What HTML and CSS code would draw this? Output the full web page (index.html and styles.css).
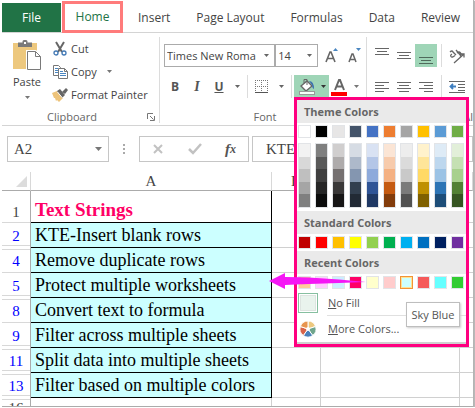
FILE: index.html
```html
<!DOCTYPE html>
<html lang="en">
<head>
<meta charset="utf-8">
<title>Workbook</title>
<link rel="stylesheet" href="styles.css">
</head>
<body>
<div class="app">
  <nav class="tabs">
    <button class="tab tab-file">File</button>
    <button class="tab tab-home">Home</button>
    <button class="tab">Insert</button>
    <button class="tab">Page Layout</button>
    <button class="tab">Formulas</button>
    <button class="tab">Data</button>
    <button class="tab">Review</button>
  </nav>

  <div class="ribbon">
    <section class="group clipboard">
      <div class="clip-body">
        <button class="paste">
          <svg width="30" height="32" viewBox="0 0 30 32"><rect x="1" y="4" width="24" height="26" fill="#edc87e"/><path d="M6 8V3.500h4.500V2.500Q10.500 1 12 1h2q1.500 0 1.500 1.500v1H20V8z" fill="#7a7a7a"/><rect x="12" y="3" width="2" height="2" fill="#fff"/><path d="M14 11h10l6 6v15H14z" fill="#fff"/><path d="M15.500 12.500h8l5 5v13h-13zM23.500 12.500v5h5" fill="#fff" stroke="#7a7a7a"/></svg>
          <span>Paste</span>
          <svg class="caret" width="5" height="3" viewBox="0 0 5 3"><path d="M0 0h5L2.500 3z" fill="#777"/></svg>
        </button>
        <div class="clip-list">
          <button class="cmd"><svg width="16" height="16" viewBox="0 0 16 16"><path d="M4 1l6 10M12 1L6 11" stroke="#666" stroke-width="2" fill="none"/><circle cx="4" cy="12" r="2" fill="#fff" stroke="#4178b4" stroke-width="1.300"/><circle cx="12" cy="12" r="2" fill="#fff" stroke="#4178b4" stroke-width="1.300"/></svg><span>Cut</span></button>
          <button class="cmd"><svg width="16" height="16" viewBox="0 0 16 16"><path d="M1.500 1.500h5l2 2v8h-7z" fill="#fff" stroke="#777"/><path d="M3 4.500h3M3 6.500h3M3 8.500h3" stroke="#4a86c0"/><path d="M6.500 4.500h6l3 3v7h-9z" fill="#fff" stroke="#777"/><path d="M12.500 4.500v3h3" fill="none" stroke="#777"/><path d="M8 7.500h3M8 9.500h6M8 11.500h6" stroke="#4a86c0"/></svg><span>Copy</span><svg class="copy-caret" width="5" height="3" viewBox="0 0 5 3"><path d="M0 0h5L2.500 3z" fill="#777"/></svg></button>
          <button class="cmd"><svg width="16" height="16" viewBox="0 0 16 16"><path d="M0 6l5-2 6 7-4 4-2-2-1 1-1-3-1 0z" fill="#edc37a"/><path d="M5 4l3-2 5 6-3 3z" fill="#666"/><path d="M5.500 5l5 6" stroke="#fff"/><path d="M10 5l4-4 2 2-3 4z" fill="#666"/></svg><span>Format Painter</span></button>
        </div>
      </div>
      <footer class="foot"><span>Clipboard</span><svg class="launcher" width="8" height="8" viewBox="0 0 8 8"><path d="M.5 6V.5H6M3 3l3.500 3.500M7.500 3v4.500H3" fill="none" stroke="#777"/></svg></footer>
    </section>

    <section class="group font">
      <div class="row row-top">
        <label class="combo combo-face"><select aria-label="Font"><option>Times New Roma</option></select><svg width="5" height="3" viewBox="0 0 5 3"><path d="M0 0h5L2.500 3z" fill="#666"/></svg></label>
        <label class="combo combo-size"><select aria-label="Font size"><option>14</option></select><svg width="5" height="3" viewBox="0 0 5 3"><path d="M0 0h5L2.500 3z" fill="#666"/></svg></label>
        <button class="icon grow" aria-label="Increase font size"><svg width="14" height="16" viewBox="0 0 14 16"><path d="M1 14L5 4h1l4 10M2.500 10.500h6" fill="none" stroke="#666" stroke-width="1.600"/><path d="M8 3l2.500-3L13 3z" fill="#4a86c0"/></svg></button>
        <button class="icon shrink" aria-label="Decrease font size"><svg width="14" height="16" viewBox="0 0 14 16"><path d="M1 14l3-8h1l3 8M2 11.500h5" fill="none" stroke="#666" stroke-width="1.500"/><path d="M8 0h5l-2.500 3z" fill="#4a86c0"/></svg></button>
      </div>
      <div class="row row-bottom">
        <button class="icon letter bold">B</button>
        <button class="icon letter italic">I</button>
        <button class="icon letter underline">U</button>
        <button class="icon arrow" aria-label="Underline styles"><svg width="5" height="3" viewBox="0 0 5 3"><path d="M0 0h5L2.500 3z" fill="#666"/></svg></button>
        <i class="sep"></i>
        <button class="icon borders" aria-label="Borders"><svg width="14" height="14" viewBox="0 0 14 14"><path d="M0 .5h13M0 6.500h13M.5 0v13M6.500 0v13M12.500 0v13" stroke="#777" stroke-dasharray="1 1"/><path d="M0 12.500h13" stroke="#555"/></svg></button>
        <button class="icon arrow" aria-label="Border styles"><svg width="5" height="3" viewBox="0 0 5 3"><path d="M0 0h5L2.500 3z" fill="#666"/></svg></button>
        <i class="sep"></i>
        <div class="fill">
          <button class="fill-button" aria-label="Fill color"><svg width="18" height="18" viewBox="0 0 18 18"><path d="M3 8l6-5 5 5-6 5z" fill="#fff" stroke="#666" stroke-width="1.300"/><path d="M6 5V1.500h3V7" fill="none" stroke="#666"/><path d="M11 3q5 0 5 8-2-1-2-4z" fill="#3c70b0"/><rect x="1.500" y="13.500" width="15" height="3" fill="#f4fff8" stroke="#999"/></svg><svg width="5" height="3" viewBox="0 0 5 3"><path d="M0 0h5L2.500 3z" fill="#333"/></svg></button>
          <div class="menu">
            <h3>Theme Colors</h3>
            <div class="swatches">
              <i style="background:#fff"></i><i style="background:#000"></i><i style="background:#e7e6e6"></i><i style="background:#44546a"></i><i style="background:#4472c4"></i><i style="background:#ed7d31"></i><i style="background:#a5a5a5"></i><i style="background:#ffc000"></i><i style="background:#5b9bd5"></i><i style="background:#70ad47"></i>
            </div>
            <div class="shades">
              <div><i style="background:#f2f2f2"></i><i style="background:#d8d8d8"></i><i style="background:#bfbfbf"></i><i style="background:#a5a5a5"></i><i style="background:#7f7f7f"></i></div>
              <div><i style="background:#7f7f7f"></i><i style="background:#595959"></i><i style="background:#3f3f3f"></i><i style="background:#262626"></i><i style="background:#0c0c0c"></i></div>
              <div><i style="background:#d0cece"></i><i style="background:#aeabab"></i><i style="background:#757070"></i><i style="background:#3a3838"></i><i style="background:#171616"></i></div>
              <div><i style="background:#d6dce4"></i><i style="background:#adb9ca"></i><i style="background:#8496b0"></i><i style="background:#323f4f"></i><i style="background:#222a35"></i></div>
              <div><i style="background:#d9e2f3"></i><i style="background:#b4c6e7"></i><i style="background:#8eaadb"></i><i style="background:#2f5496"></i><i style="background:#1f3864"></i></div>
              <div><i style="background:#fbe5d5"></i><i style="background:#f7cbac"></i><i style="background:#f4b183"></i><i style="background:#c55a11"></i><i style="background:#833c0b"></i></div>
              <div><i style="background:#ededed"></i><i style="background:#dbdbdb"></i><i style="background:#c9c9c9"></i><i style="background:#7b7b7b"></i><i style="background:#525252"></i></div>
              <div><i style="background:#fff2cc"></i><i style="background:#fee599"></i><i style="background:#ffd965"></i><i style="background:#bf9000"></i><i style="background:#7f6000"></i></div>
              <div><i style="background:#deebf6"></i><i style="background:#bdd7ee"></i><i style="background:#9cc3e5"></i><i style="background:#2e75b5"></i><i style="background:#1e4e79"></i></div>
              <div><i style="background:#e2efd9"></i><i style="background:#c5e0b3"></i><i style="background:#a8d08d"></i><i style="background:#538135"></i><i style="background:#375623"></i></div>
            </div>
            <h3>Standard Colors</h3>
            <div class="swatches">
              <i style="background:#c00000"></i><i style="background:#f00"></i><i style="background:#ffc000"></i><i style="background:#ff0"></i><i style="background:#92d050"></i><i style="background:#00b050"></i><i style="background:#00b0f0"></i><i style="background:#0070c0"></i><i style="background:#002060"></i><i style="background:#7030a0"></i>
            </div>
            <h3>Recent Colors</h3>
            <div class="swatches">
              <i style="background:#fc9"></i><i style="background:#fcf"></i><i style="background:#cef"></i><i style="background:#ff0066"></i><i style="background:#ffc"></i><i style="background:#fcc"></i><i class="picked" style="background:#cff"></i><i style="background:#f55a5a"></i><i style="background:#6ff"></i><i style="background:#3c3"></i>
            </div>
            <button class="item"><i class="nofill"></i><span><u>N</u>o Fill</span></button>
            <hr>
            <button class="item item-more"><svg width="20" height="18" viewBox="-10 -9 20 18"><g stroke="#fff" stroke-width="1"><path d="M0 0V-8A8 8 0 0 1 7.600-2.500z" fill="#edc87e"/><path d="M0 0L7.600-2.500A8 8 0 0 1 4.700 6.500z" fill="#6fa58c"/><path d="M0 0L4.700 6.500A8 8 0 0 1-4.700 6.500z" fill="#4a80bb"/><path d="M0 0L-4.700 6.500A8 8 0 0 1-7.600-2.500z" fill="#d9644a"/><path d="M0 0L-7.600-2.500A8 8 0 0 1 0-8z" fill="#e8954f"/></g><circle r="2" fill="#fff"/></svg><span><u>M</u>ore Colors...</span></button>
            <div class="tooltip">Sky Blue</div>
            <svg class="pointer" width="98" height="20" viewBox="0 0 98 20"><path d="M0 10L16 2V6L40 6.500 70 8.500 97 11 70 12 40 13 16 14V18z" fill="#f517f5"/></svg>
          </div>
        </div>
        <button class="icon fontcolor" aria-label="Font color"><svg width="17" height="18" viewBox="0 0 17 18"><path d="M4 12L8 2h1l4 10M5.500 8.500h6" fill="none" stroke="#666" stroke-width="2"/><rect x="0" y="14" width="16" height="4" fill="#f00"/></svg></button>
        <button class="icon arrow" aria-label="More font colors"><svg width="5" height="3" viewBox="0 0 5 3"><path d="M0 0h5L2.500 3z" fill="#777"/></svg></button>
      </div>
      <footer class="foot"><span>Font</span></footer>
    </section>

    <section class="group align">
      <div class="row row-top">
        <button class="icon al" aria-label="Top align"><svg width="14" height="22" viewBox="0 0 14 22"><path d="M0 3.500h14M2 6.500h10M0 9.500h14" stroke="#666"/></svg></button>
        <button class="icon al" aria-label="Middle align"><svg width="14" height="22" viewBox="0 0 14 22"><path d="M0 7.500h14M2 10.500h10M0 13.500h14" stroke="#666"/></svg></button>
        <button class="icon al on" aria-label="Bottom align"><svg width="14" height="22" viewBox="0 0 14 22"><path d="M0 12.500h14M2 15.500h10M0 18.500h14" stroke="#4f6a5b"/></svg></button>
        <i class="sep"></i>
        <button class="icon orient" aria-label="Orientation"><svg width="18" height="18" viewBox="0 0 18 18"><g fill="none" stroke="#666" stroke-width="1.300"><path d="M2 5q2-2 3 0l3 3M4 7q-2 1-1 2.500t4-1M8 3l5 6M9 6q2-2 3.500 0t-.5 3.500"/><path d="M6 16L16 7M12.500 7H16v3.500"/></g></svg></button>
        <button class="icon arrow" aria-label="Orientation options"><svg width="5" height="3" viewBox="0 0 5 3"><path d="M0 0h5L2.500 3z" fill="#666"/></svg></button>
      </div>
      <div class="row row-bottom">
        <button class="icon al" aria-label="Align left"><svg width="14" height="12" viewBox="0 0 14 12"><path d="M0 1.500h14M0 4.500h9M0 7.500h14M0 10.500h9" stroke="#666"/></svg></button>
        <button class="icon al" aria-label="Center"><svg width="14" height="12" viewBox="0 0 14 12"><path d="M0 1.500h14M2 4.500h10M0 7.500h14M2 10.500h10" stroke="#666"/></svg></button>
        <button class="icon al" aria-label="Align right"><svg width="14" height="12" viewBox="0 0 14 12"><path d="M0 1.500h14M5 4.500h9M0 7.500h14M5 10.500h9" stroke="#666"/></svg></button>
        <i class="sep"></i>
        <button class="icon orient" aria-label="Decrease indent"><svg width="18" height="14" viewBox="0 0 18 14"><path d="M1 1.500h16M10 4.500h7M10 7.500h7M1 12.500h16M10 10.500h7" stroke="#666"/><path d="M8 6.500H3M5 4L2.500 6.500 5 9" fill="none" stroke="#3f7fc0" stroke-width="1.800"/></svg></button>
        <button class="icon arrow" aria-label="Increase indent"><svg width="5" height="14" viewBox="0 0 5 14"><path d="M0 1.500h5M0 12.500h5" stroke="#666"/><path d="M0 6.500h5" stroke="#3f7fc0" stroke-width="1.800"/></svg></button>
      </div>
      <footer class="foot"><span>Al</span></footer>
    </section>
  </div>

  <div class="formula-bar">
    <label class="namebox"><input aria-label="Name box" value="A2"><svg width="7" height="4" viewBox="0 0 7 4"><path d="M0 0h7L3.500 4z" fill="#777"/></svg></label>
    <svg class="dots" width="2" height="10" viewBox="0 0 2 10"><path d="M0 0h2v2H0zM0 4h2v2H0zM0 8h2v2H0z" fill="#aaa"/></svg>
    <div class="fx">
      <button class="icon" aria-label="Cancel"><svg width="12" height="12" viewBox="0 0 12 12"><path d="M2 2l8 8M10 2l-8 8" stroke="#c2c2c2" stroke-width="2"/></svg></button>
      <button class="icon" aria-label="Enter"><svg width="14" height="12" viewBox="0 0 14 12"><path d="M1 6l4 4 8-9" fill="none" stroke="#c2c2c2" stroke-width="2.500"/></svg></button>
      <button class="icon fn"><i>f</i><small>x</small></button>
    </div>
    <input class="formula" aria-label="Formula" value="KTE">
  </div>

  <table class="sheet">
    <colgroup><col class="c-num"><col class="c-a"><col class="c-b"><col class="c-c"><col></colgroup>
    <thead>
      <tr><th class="corner"><svg width="11" height="11" viewBox="0 0 11 11"><path d="M11 0v11H0z" fill="#dcdcdc"/></svg></th><th>A</th><th>B</th><th></th><th></th></tr>
    </thead>
    <tbody>
      <tr class="title"><th><span>1</span></th><td>Text Strings</td><td></td><td></td><td></td></tr>
      <tr><th><span class="below">2</span></th><td>KTE-Insert blank rows</td><td></td><td></td><td></td></tr>
      <tr><th><span class="above">4</span></th><td>Remove duplicate rows</td><td></td><td></td><td></td></tr>
      <tr><th><span class="below">5</span></th><td>Protect multiple worksheets</td><td></td><td></td><td></td></tr>
      <tr><th><span class="above">8</span></th><td>Convert text to formula</td><td></td><td></td><td></td></tr>
      <tr><th><span class="below">9</span></th><td>Filter across multiple sheets</td><td></td><td></td><td></td></tr>
      <tr><th><span class="above below">11</span></th><td>Split data into multiple sheets</td><td></td><td></td><td></td></tr>
      <tr><th><span class="above below">13</span></th><td>Filter based on multiple colors</td><td></td><td></td><td></td></tr>
      <tr class="last"><th><span class="above">16</span></th><td></td><td></td><td></td><td></td></tr>
    </tbody>
  </table>
</div>
</body>
</html>
```
FILE: styles.css
```css
* { box-sizing: border-box; }

body {
  margin: 0;
  background: #fff;
  color: #444;
  font: 11px/16px "Open Sans", "Noto Sans", sans-serif;
}

button, input, select {
  margin: 0;
  padding: 0;
  border: 0;
  border-radius: 0;
  background: none;
  color: inherit;
  font: inherit;
}

button { display: flex; align-items: center; justify-content: center; }
svg { display: block; flex: none; }

.app {
  margin: 0 2px;
  border-bottom: 1px solid #ababab;
  box-shadow: 1px 0 0 #b4b4b4, 2px 1px 1px #b8b8b8;
}

/* Tabs */
.tabs {
  display: flex;
  align-items: flex-end;
  height: 33px;
  border-bottom: 1px solid #d4d4d4;
  font-size: 12px;
}
.tab { flex: none; height: 29px; padding: 0 13px; white-space: nowrap; }
.tab-file { width: 59px; background: #217346; color: #fff; }
.tab-home {
  width: 61px;
  height: 32px;
  margin: 0 2px -1px 1px;
  padding: 0;
  border: 3px solid #ff7b7b;
  background: #fff;
  color: #217346;
}

/* Ribbon */
.ribbon {
  display: flex;
  height: 93px;
  padding-top: 4px;
  border-bottom: 1px solid #d4d4d4;
}
.group {
  display: flex;
  flex-direction: column;
  flex: none;
  height: 86px;
  border-right: 1px solid #dcdcdc;
}
.foot { display: flex; justify-content: center; margin-top: auto; height: 12px; line-height: 12px; color: #666; }
.clipboard { width: 158px; }
.clipboard .foot { align-items: center; padding: 0 4px 0 45px; justify-content: space-between; }
.clip-body { display: flex; }
.paste { flex-direction: column; justify-content: flex-start; width: 50px; padding-top: 2px; }
.paste span { margin: 3px 0 6px; }
.clip-list { display: flex; flex-direction: column; }
.cmd { justify-content: flex-start; gap: 3px; height: 23px; white-space: nowrap; }
.copy-caret { margin-left: 7px; }

.font { width: 207px; padding-left: 4px; }
.row { display: flex; height: 23px; align-items: stretch; }
.row-top { margin-top: 7px; }
.row-bottom { margin-top: 8px; }
.icon { flex: none; }
.combo { display: grid; height: 23px; border: 1px solid #ababab; align-items: center; }
.combo select, .combo svg { grid-area: 1 / 1; }
.combo select { appearance: none; width: 100%; padding-left: 2px; }
.combo svg { justify-self: end; margin-right: 5px; pointer-events: none; }
.combo-face { width: 112px; }
.combo-size { width: 43px; }
.grow { width: 23px; margin-left: 2px; }
.shrink { width: 23px; }

.letter { width: 22px; font-size: 12px; font-weight: 700; color: #555; }
.italic { font-family: "Liberation Serif", serif; font-size: 14px; font-style: italic; }
.underline { text-decoration: underline; }
.arrow { width: 15px; }
.sep { flex: none; width: 1px; background: #dcdcdc; }
.borders { width: 24px; }
.font .sep { margin: 0 2px; }
.fontcolor { width: 20px; }

.align { flex: 1 1 0; min-width: 0; overflow: hidden; padding-left: 4px; border-right: 0; }
.al { width: 22px; }
.al.on { background: #9fd5b7; }
.align .sep { margin: 0 4px; }
.orient { width: 22px; }
.align .foot { justify-content: flex-end; }

/* Fill colour menu */
.fill { position: relative; z-index: 5; flex: none; width: 35px; }
.fill-button { width: 35px; height: 23px; gap: 5px; background: #9fd5b7; }
.menu {
  position: absolute;
  top: 22px;
  left: 0;
  width: 175px;
  border: 3px solid #ff0080;
  background: #fff;
  box-shadow: inset 0 -2px 0 #d0d0d0;
  padding-bottom: 2px;
}
.menu h3 {
  margin: 0;
  padding-left: 7px;
  background: #eaeaea;
  color: #666;
  font-size: 11px;
  line-height: 23px;
}
.swatches, .shades { display: flex; gap: 4px; padding: 2px 1px; }
.swatches i, .shades div { width: 13px; border: 1px solid #e2e4e7; }
.swatches i { height: 13px; }
.swatches .picked { border-color: #f29436; box-shadow: inset 0 0 0 1px #ffe294; }
.shades { padding: 3px 1px; }
.shades div { display: flex; flex-direction: column; height: 65px; }
.shades i { flex: 1; }
.item { justify-content: flex-start; gap: 10px; width: 100%; height: 24px; padding-left: 1px; color: #555; }
.item-more { height: 26px; }
.nofill { width: 20px; height: 20px; border: 1px solid #86bfa0; background: #e9f3ed; box-shadow: inset 0 0 0 1px #fff, inset 0 0 0 2px #dde4e0; }
.menu hr { margin: 0 0 0 30px; border: 0; border-top: 1px solid #e0e0e0; }
.tooltip {
  position: absolute;
  right: 6px;
  bottom: 17px;
  width: 54px;
  border: 1px solid #bebebe;
  background: #fff;
  box-shadow: 1px 1px 2px #ccc;
  color: #555;
  line-height: 23px;
  text-align: center;
  white-space: nowrap;
}
.pointer { position: absolute; top: 171px; left: -28px; }

/* Formula bar */
.formula-bar {
  display: flex;
  align-items: center;
  height: 46px;
  padding-left: 5px;
  font: 15px/18px "Liberation Serif", serif;
}
.namebox, .fx, .formula { height: 26px; border: 1px solid #c6c6c6; }
.namebox { display: flex; align-items: center; width: 102px; padding: 0 6px; }
.namebox input { flex: 1; min-width: 0; }
.dots { margin: 0 14px; }
.fx { display: flex; align-items: center; justify-content: space-between; width: 110px; padding: 0 12px; }
.fn { color: #555; font-weight: 700; }
.fn small { font-size: 12px; font-style: italic; }
.formula { flex: 1; min-width: 0; margin-left: 3px; padding-left: 13px; }

/* Worksheet */
.sheet {
  width: 100%;
  border-spacing: 0;
  table-layout: fixed;
  color: #000;
  font: 18px/24px "Liberation Serif", serif;
}
.c-num { width: 29px; }
.c-a { width: 241px; }
.c-b { width: 49px; }
.c-c { width: 139px; }
.sheet th, .sheet td { padding: 0; }
.sheet thead th {
  height: 19px;
  border-right: 1px solid #d8d8d8;
  border-bottom: 1px solid #ababab;
  color: #444;
  font-size: 15px;
  font-weight: 400;
  line-height: 18px;
}
.sheet .corner svg { margin-left: 14px; }
.sheet td { height: 25px; border-right: 1px solid #d0d0d0; border-bottom: 1px solid #d0d0d0; }
.sheet tbody th {
  border-right: 1px solid #ababab;
  color: #00f;
  font-size: 15px;
  font-weight: 400;
  vertical-align: top;
}
.sheet tbody span { display: block; height: 25px; border-bottom: 1px solid #d8d8d8; line-height: 26px; }
.sheet tbody .above { height: 24px; margin-top: 1px; border-top: 1px solid #d8d8d8; line-height: 22px; }
.sheet tbody .below { height: 23px; margin-bottom: 2px; }
.sheet tbody .above.below { height: 22px; }
.sheet td:nth-child(2) { padding-left: 4px; border-color: #000; background: #cff; white-space: nowrap; }
.sheet td:last-child { border-right: 0; }
.sheet .title td { height: 32px; }
.sheet .title td:nth-child(2) { padding-top: 7px; background: none; color: #ff0066; font-size: 19px; font-weight: 700; }
.sheet .title th { color: #444; }
.sheet .title span { height: 32px; padding-top: 8px; }
.sheet .last td { height: 8px; border-bottom: 0; }
.sheet .last td:nth-child(2) { border-color: #d0d0d0; background: none; }
.sheet .last span { height: 7px; overflow: hidden; border-bottom: 0; color: #444; line-height: 16px; }
```
